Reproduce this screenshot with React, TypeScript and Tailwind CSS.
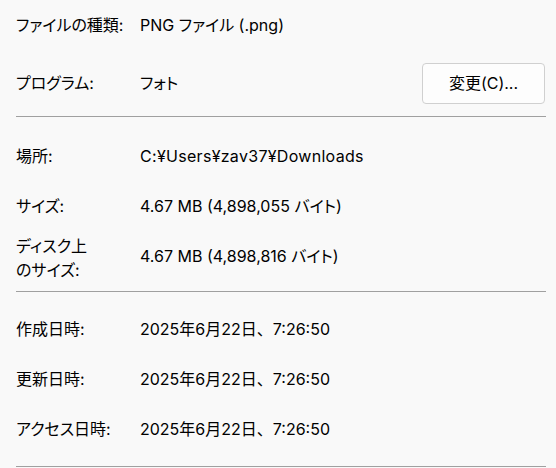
import React from "react";

const font = { fontFamily: 'Inter, "Noto Sans CJK JP", sans-serif' };

const Row: React.FC<{ label: string; children: React.ReactNode }> = ({ label, children }) => (
  <div className="flex items-center h-[50px]">
    <div className="w-[124px] shrink-0">{label}</div>
    <div>{children}</div>
  </div>
);

const Divider: React.FC = () => <div className="h-px bg-[#a0a0a0] w-[530px]" />;

const DateValue: React.FC = () => (
  <>
    2025年6月22日<span className="[font-feature-settings:normal]">、</span>7:26:50
  </>
);

const App: React.FC = () => {
  return (
    <div
      className="w-[556px] h-[468px] bg-[#f9f9f9] text-[16px] text-black pl-4 overflow-hidden [font-feature-settings:'palt']"
      style={font}
    >
      <Row label="ファイルの種類:">PNG ファイル (.png)</Row>
      <div className="flex items-center h-[66px]">
        <div className="w-[124px] shrink-0">プログラム:</div>
        <div className="flex-1">フォト</div>
        <button className="w-[123px] h-[41px] mr-[11px] rounded-[4px] border border-[#d0d0d0] bg-[#fdfdfd] text-[16px]">
          変更(C)...
        </button>
      </div>
      <Divider />

      <div className="pt-[14px] pb-[10px]">
        <Row label="場所:">
          <span className="tracking-[0.3px]">C:¥Users¥zav37¥Downloads</span>
        </Row>
        <Row label="サイズ:">4.67 MB (4,898,055 バイト)</Row>
        <div className="flex items-center h-[50px]">
          <div className="w-[124px] shrink-0 leading-[24px] pt-[3px]">
            ディスク上
            <br />
            のサイズ:
          </div>
          <div>4.67 MB (4,898,816 バイト)</div>
        </div>
      </div>
      <Divider />

      <div className="pt-[12px] pb-[12px]">
        <Row label="作成日時:">
          <DateValue />
        </Row>
        <Row label="更新日時:">
          <DateValue />
        </Row>
        <Row label="アクセス日時:">
          <DateValue />
        </Row>
      </div>
      <Divider />
    </div>
  );
};

export default App;
